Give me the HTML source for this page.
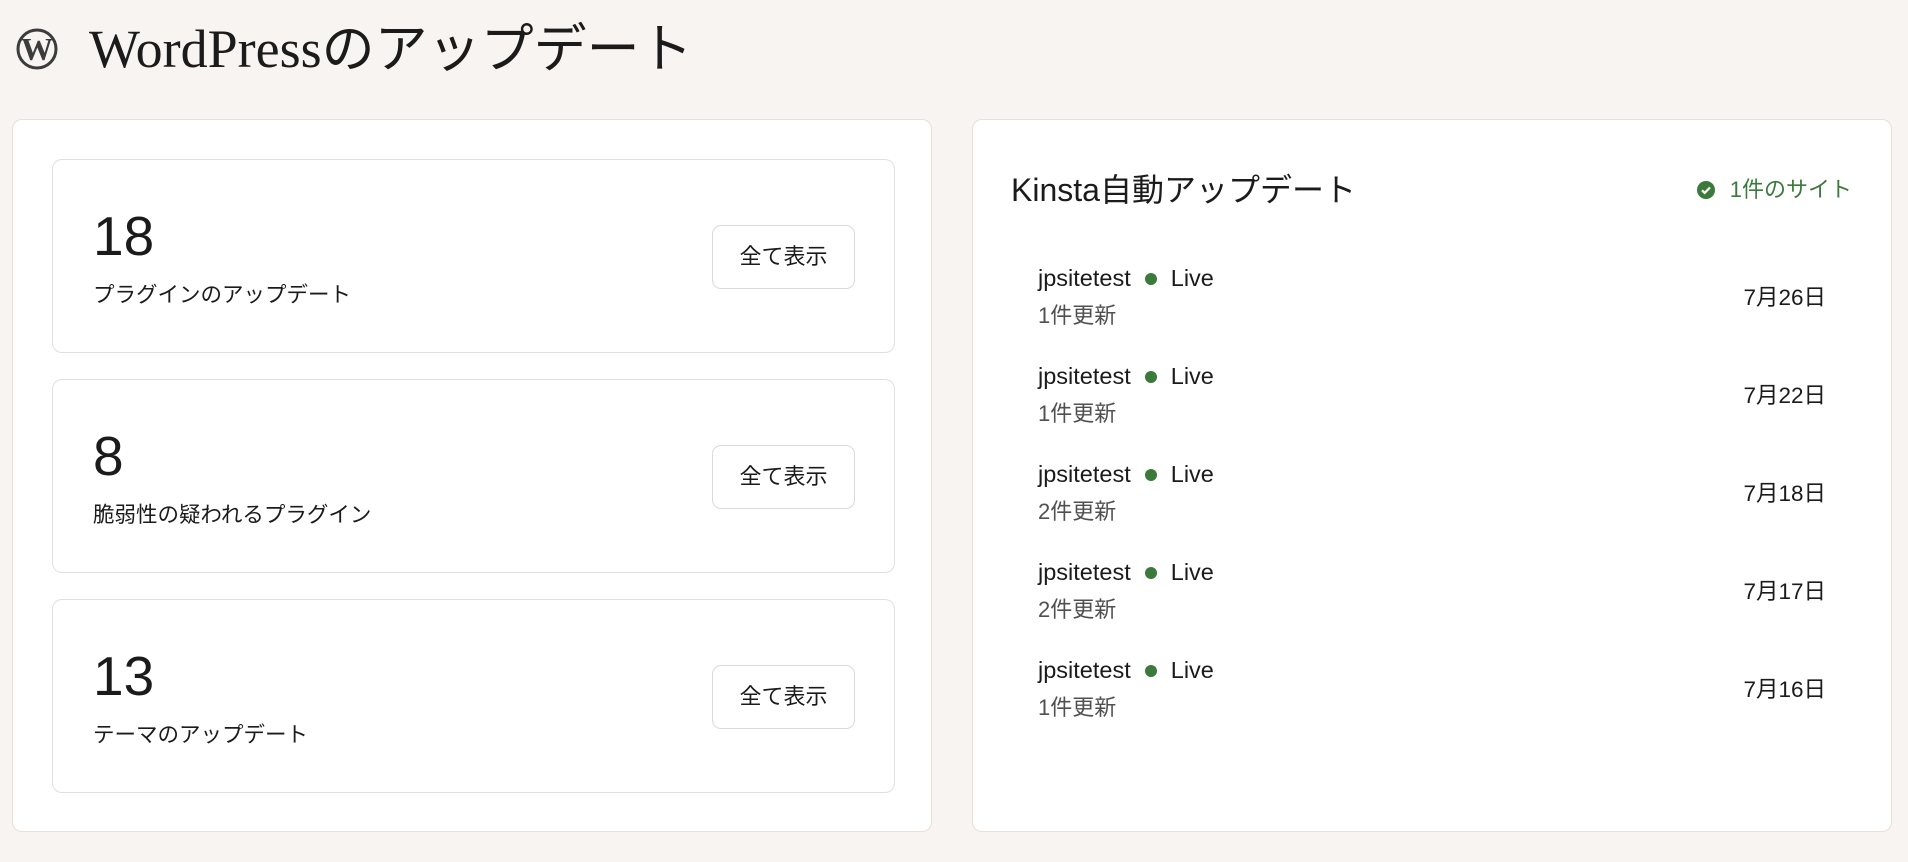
<!DOCTYPE html>
<html><head><meta charset="utf-8"><style>
*{margin:0;padding:0;box-sizing:border-box}
body{width:1908px;height:862px;background:#f7f4f1;font-family:"Liberation Sans","Noto Sans CJK JP",sans-serif;color:#1b1b1b;position:relative;overflow:hidden}
.abs{position:absolute}
.title{left:89px;top:14px;font-family:"Liberation Serif","Noto Sans CJK JP",serif;font-size:54px;line-height:70px;color:#1b1b1b;white-space:nowrap}
.title .j{font-size:53px}
.card{position:absolute;top:119px;width:920px;height:713px;background:#fff;border:1px solid #e8e0da;border-radius:10px}
.box{position:absolute;left:39px;width:843px;height:194px;border:1px solid #e2e0de;border-radius:10px}
.num{position:absolute;left:40px;top:46px;font-size:55px;line-height:60px}
.lbl{position:absolute;left:40px;top:121px;font-size:21.5px;line-height:28px}
.btn{position:absolute;left:659px;top:65px;width:143px;height:64px;border:1px solid #dcd9d6;border-radius:9px;font-size:22px;line-height:62px;text-align:center}
.row{position:absolute;left:65px;width:800px;height:80px}
.nm{position:absolute;left:0;top:0;font-size:23.5px;line-height:30px;white-space:nowrap}
.dot{display:inline-block;width:12px;height:12px;border-radius:50%;background:#3b7a3b;margin:0 14px 2px 14px;vertical-align:middle}
.sub{position:absolute;left:0;top:38px;font-size:22px;line-height:30px;color:#505050}
.dt{position:absolute;right:12px;top:20px;font-size:22.5px;line-height:30px}
</style></head><body>
<svg class="abs" style="left:16px;top:28px" width="42" height="42" viewBox="0 0 42 42">
<circle cx="21" cy="21" r="19" fill="none" stroke="#3c3c3c" stroke-width="3"/>
<text x="21" y="32" text-anchor="middle" font-family="Liberation Serif,serif" font-weight="bold" font-size="32" fill="#3c3c3c">W</text>
</svg>
<div class="abs title">WordPress<span class="j">のアップデート</span></div>

<div class="card" style="left:12px">
 <div class="box" style="top:39px"><div class="num">18</div><div class="lbl">プラグインのアップデート</div><div class="btn">全て表示</div></div>
 <div class="box" style="top:259px"><div class="num">8</div><div class="lbl">脆弱性の疑われるプラグイン</div><div class="btn">全て表示</div></div>
 <div class="box" style="top:479px"><div class="num">13</div><div class="lbl">テーマのアップデート</div><div class="btn">全て表示</div></div>
</div>

<div class="card" style="left:972px">
 <div class="abs" style="left:38px;top:50px;font-size:32px;line-height:40px">Kinsta自動アップデート</div>
 <div class="abs" style="right:39px;top:55px;font-size:22px;line-height:30px;color:#3b7a3b;white-space:nowrap">
  <svg width="20" height="20" viewBox="0 0 20 20" style="vertical-align:-3px;margin-right:14px"><circle cx="10" cy="10" r="9" fill="#3b7a3b"/><path d="M6 10.3l2.7 2.6L14 7.5" fill="none" stroke="#fff" stroke-width="2.2"/></svg>1件のサイト</div>
 <div class="row" style="top:143px"><div class="nm">jpsitetest<span class="dot"></span>Live</div><div class="sub">1件更新</div><div class="dt">7月26日</div></div>
 <div class="row" style="top:241px"><div class="nm">jpsitetest<span class="dot"></span>Live</div><div class="sub">1件更新</div><div class="dt">7月22日</div></div>
 <div class="row" style="top:339px"><div class="nm">jpsitetest<span class="dot"></span>Live</div><div class="sub">2件更新</div><div class="dt">7月18日</div></div>
 <div class="row" style="top:437px"><div class="nm">jpsitetest<span class="dot"></span>Live</div><div class="sub">2件更新</div><div class="dt">7月17日</div></div>
 <div class="row" style="top:535px"><div class="nm">jpsitetest<span class="dot"></span>Live</div><div class="sub">1件更新</div><div class="dt">7月16日</div></div>
</div>
</body></html>
